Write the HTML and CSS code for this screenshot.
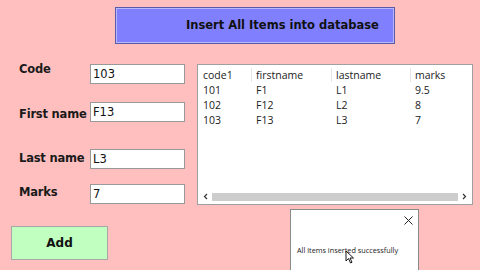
FILE: index.html
```html
<!DOCTYPE html>
<html>
<head>
<meta charset="utf-8">
<link rel="stylesheet" href="styles.css">
</head>
<body>
<div class="form">
  <div class="top">
    <button class="insert">Insert All Items into database</button>
  </div>
  <div class="main">
    <div class="fields">
      <div class="row r-code"><span class="lbl">Code</span><span class="inp">103</span></div>
      <div class="row r-first"><span class="lbl">First name</span><span class="inp">F13</span></div>
      <div class="row r-last"><span class="lbl">Last name</span><span class="inp">L3</span></div>
      <div class="row r-marks"><span class="lbl">Marks</span><span class="inp">7</span></div>
    </div>
    <div class="grid">
      <div class="table">
        <div class="tr head"><span>code1</span><span>firstname</span><span>lastname</span><span>marks</span></div>
        <div class="tr"><span>101</span><span>F1</span><span>L1</span><span>9.5</span></div>
        <div class="tr"><span>102</span><span>F12</span><span>L2</span><span>8</span></div>
        <div class="tr"><span>103</span><span>F13</span><span>L3</span><span>7</span></div>
      </div>
      <div class="hscroll">
        <svg class="arrow" width="12" height="9" viewBox="0 0 12 9"><path d="M7 2 L4.5 4.5 L7 7" fill="none" stroke="#333" stroke-width="1.2"/></svg>
        <span class="thumb"></span>
        <svg class="arrow" width="12" height="9" viewBox="0 0 12 9"><path d="M5 2 L7.5 4.5 L5 7" fill="none" stroke="#333" stroke-width="1.2"/></svg>
      </div>
    </div>
  </div>
  <div class="bottom">
    <button class="add">Add</button>
  </div>
  <div class="msgbox">
    <svg class="close" width="9" height="9" viewBox="0 0 9 9"><path d="M0.5 0.5 L8.5 8.5 M8.5 0.5 L0.5 8.5" stroke="#222" stroke-width="1"/></svg>
    <p class="msg">All items inserted successfully</p>
    <svg class="cursor" width="10" height="14" viewBox="0 0 10 14"><path d="M1 1 L1 11 L3.5 8.5 L5.5 13 L7 12.3 L5 8 L8.5 8 Z" fill="#fff" stroke="#000" stroke-width="0.9"/></svg>
  </div>
</div>
</body>
</html>
```
FILE: styles.css
```css
html, body { margin: 0; padding: 0; }
body {
  width: 480px; height: 270px; overflow: hidden;
  background: #ffbfbf;
  font-family: "DejaVu Sans", Tahoma, sans-serif;
}
.form { position: relative; width: 480px; height: 270px; }
.top { padding: 7px 0 0 115px; height: 37px; }
.insert {
  display: block; width: 280px; height: 37px; margin: 0;
  background: #8080ff;
  border: 1px solid #5a5aa8;
  box-shadow: inset 0 0 0 1px #b8b8ff;
  font-family: "DejaVu Sans", sans-serif; font-weight: bold; font-size: 11.5px;
  color: #111;
  text-align: left; padding: 0 0 1px 70px;
}
.main { display: flex; padding-top: 20px; }
.fields { width: 197px; padding-left: 19px; box-sizing: border-box; }
.row { display: flex; align-items: center; height: 20px; }
.r-first { margin-top: 18px; }
.r-last { margin-top: 27px; }
.r-marks { margin-top: 15px; }
.lbl {
  width: 71px; font-weight: bold; font-size: 11.5px; color: #1a1a1a;
  letter-spacing: -0.2px; position: relative;
}
.r-code .lbl { top: -5px; }
.r-first .lbl { top: 2px; }
.r-last .lbl { top: -1px; }
.r-marks .lbl { top: -2px; }
.inp {
  box-sizing: border-box; width: 95px; height: 20px;
  background: #fff; border: 1px solid #999;
  font-family: "DejaVu Sans", sans-serif; font-size: 11.5px; color: #111;
  padding: 2px 0 0 2px; line-height: 15px;
}
.grid {
  box-sizing: border-box; width: 276px; height: 141px; margin-top: 0;
  background: #fff; border: 1px solid #a0a0a0;
  display: flex; flex-direction: column;
}
.table { flex: 1; padding-top: 2px; }
.tr {
  display: grid; grid-template-columns: 53px 80px 79px 60px;
  height: 15px; line-height: 15px;
  font-family: "Open Sans", sans-serif; font-size: 10.5px; color: #222;
  padding-left: 5px;
}
.tr.head { height: 16px; line-height: 16px; }
.tr.head span { position: relative; }
.tr.head span + span::before {
  content: ""; position: absolute; left: -5px; top: 1px; width: 1px; height: 14px; background: #e6e6e6;
}
.hscroll {
  display: flex; align-items: center; height: 9px; margin: 0 2px 3px 2px;
}
.arrow { display: block; flex: none; }
.thumb { flex: 1; height: 8px; background: #cdcdcd; }
.bottom { padding: 21px 0 0 11px; }
.add {
  display: block; width: 97px; height: 34px; margin: 0;
  background: #c0ffc0; border: 1px solid #a8a8a8;
  font-family: "DejaVu Sans", sans-serif; font-weight: bold; font-size: 12px; color: #111;
}
.msgbox {
  position: absolute; left: 290px; top: 209px; width: 129px; height: 70px;
  box-sizing: border-box; background: #fff; border: 1px solid #8a8a8a;
}
.close { position: absolute; left: 113px; top: 6px; }
.msg {
  margin: 0; position: absolute; left: 6px; top: 35px;
  font-family: "Open Sans", sans-serif; font-size: 7.3px; color: #222; white-space: nowrap;
}
.cursor { position: absolute; left: 54px; top: 40px; }
```
